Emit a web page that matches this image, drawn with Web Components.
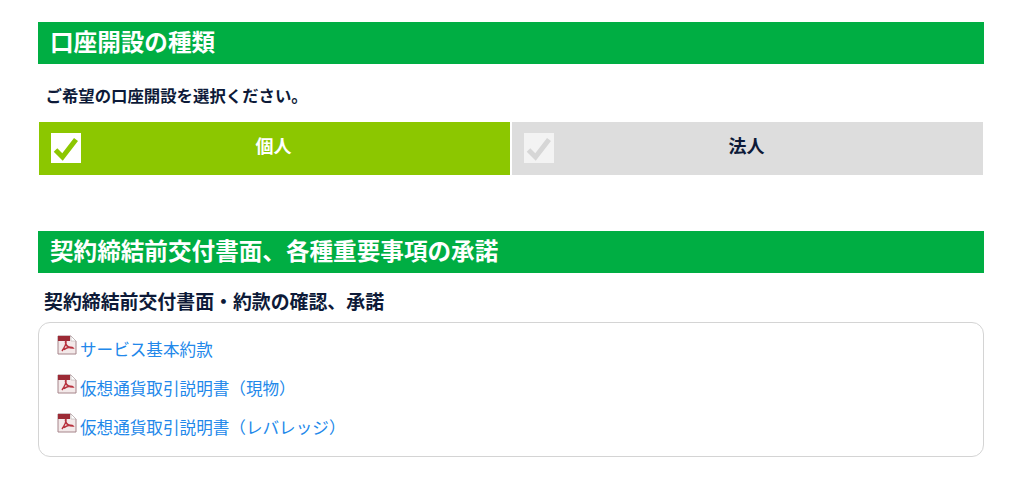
<!DOCTYPE html>
<html lang="ja">
<head>
<meta charset="utf-8">
<style>
body{margin:0;background:#fff;font-family:"Noto Sans CJK JP","Liberation Sans",sans-serif;color:#0d1a38}
</style>
</head>
<body>
<account-form>
  <form-section title="口座開設の種類">
    <p-lead>ご希望の口座開設を選択ください。</p-lead>
    <choice-row>
      <choice-button selected>個人</choice-button>
      <choice-button>法人</choice-button>
    </choice-row>
  </form-section>
  <form-section title="契約締結前交付書面、各種重要事項の承諾" class="second">
    <sub-heading>契約締結前交付書面・約款の確認、承諾</sub-heading>
    <doc-box>
      <pdf-link>サービス基本約款</pdf-link>
      <pdf-link>仮想通貨取引説明書（現物）</pdf-link>
      <pdf-link>仮想通貨取引説明書（レバレッジ）</pdf-link>
    </doc-box>
  </form-section>
</account-form>
<script>
class AccountForm extends HTMLElement{
    constructor(){
        super();
        this.attachShadow({mode:'open'}).innerHTML=`
        <style>
        :host{display:flex;flex-direction:column;gap:56px;padding:22.4px 41px 0 38px}
        </style>
        <slot></slot>`
    }
}
class FormSection extends HTMLElement{
    constructor(){
        super();
        this.attachShadow({mode:'open'})
    }
    connectedCallback(){
        this.shadowRoot.innerHTML=`
        <style>
        :host{display:block}
        h2{margin:0;height:42px;line-height:39px;background:#00ae43;color:#fff;font-size:23.6px;font-weight:700;padding-left:12px;white-space:nowrap}
        </style>
        <h2>${this.getAttribute('title')}</h2>
        <slot></slot>`
        this.removeAttribute('title')
    }
}
class PLead extends HTMLElement{
    constructor(){
        super();
        this.attachShadow({mode:'open'}).innerHTML=`
        <style>
        :host{display:block;padding:20px 0 0 7.5px;height:37.6px;font-size:16.4px;line-height:22px;font-weight:700}
        </style>
        <slot></slot>`
    }
}
class ChoiceRow extends HTMLElement{
    constructor(){
        super();
        this.attachShadow({mode:'open'}).innerHTML=`
        <style>
        :host{display:flex;gap:2px;padding:0 1px}
        </style>
        <slot></slot>`
    }
}
class ChoiceButton extends HTMLElement{
    constructor(){
        super();
        const on = this.hasAttribute('selected')
        this.attachShadow({mode:'open'}).innerHTML=`
        <style>
        :host{flex:1;display:flex;align-items:center;height:46px;padding:0 2px 7px 0;position:relative;justify-content:center;
            font-size:18px;font-weight:700;background:${on?'#8cc700':'#dddddd'};color:${on?'#fff':'#0d1a38'}}
        svg{position:absolute;left:12px;top:11px}
        </style>
        <svg width="30" height="30" viewBox="0 0 30 30">
          <rect width="30" height="30" fill="${on?'#fff':'#f3f3f3'}"/>
          <path d="M4.5 17L11.5 24L25 6.5" fill="none" stroke="${on?'#8cc700':'#d6d6d6'}" stroke-width="5"/>
        </svg>
        <slot></slot>`
    }
}
class SubHeading extends HTMLElement{
    constructor(){
        super();
        this.attachShadow({mode:'open'}).innerHTML=`
        <style>
        :host{display:block;padding:15px 0 0 6px;height:34px;font-size:18.9px;line-height:26px;font-weight:700;white-space:nowrap}
        </style>
        <slot></slot>`
    }
}
class DocBox extends HTMLElement{
    constructor(){
        super();
        this.attachShadow({mode:'open'}).innerHTML=`
        <style>
        :host{display:flex;flex-direction:column;gap:14px;border:1px solid #d4d4d4;border-radius:12px;padding:12px 18px 17px;height:104px}
        </style>
        <slot></slot>`
    }
}
class PdfLink extends HTMLElement{
    constructor(){
        super();
        this.attachShadow({mode:'open'}).innerHTML=`
        <style>
        :host{display:flex;align-items:flex-start;height:25px;font-size:16.6px;color:#2288ea}
        svg{flex:none;margin-right:3px}
        a{color:inherit;text-decoration:none;line-height:25px;margin-top:2px}
        </style>
        <svg width="20" height="20" viewBox="0 0 20 20">
          <path d="M1 1H14L19 6V19H1Z" fill="#f3e9e9" stroke="#a5848a" stroke-width="1"/>
          <path d="M1 1H13V6H1Z" fill="#9c2a35"/>
          <path d="M14 1L19 6H14Z" fill="#fff" stroke="#b9b0b0" stroke-width=".6"/>
          <path d="M5 16C7 13 9.5 9 9 6.5C8.8 6 8.2 6.5 8.6 8C9.2 10.5 11.5 13 16 13C15 11.8 11 12 7 14.5" fill="none" stroke="#b8333f" stroke-width="1.5"/>
        </svg>
        <a href="#"><slot></slot></a>`
    }
}
customElements.define('account-form',AccountForm)
customElements.define('form-section',FormSection)
customElements.define('p-lead',PLead)
customElements.define('choice-row',ChoiceRow)
customElements.define('choice-button',ChoiceButton)
customElements.define('sub-heading',SubHeading)
customElements.define('doc-box',DocBox)
customElements.define('pdf-link',PdfLink)
</script>
</body>
</html>
